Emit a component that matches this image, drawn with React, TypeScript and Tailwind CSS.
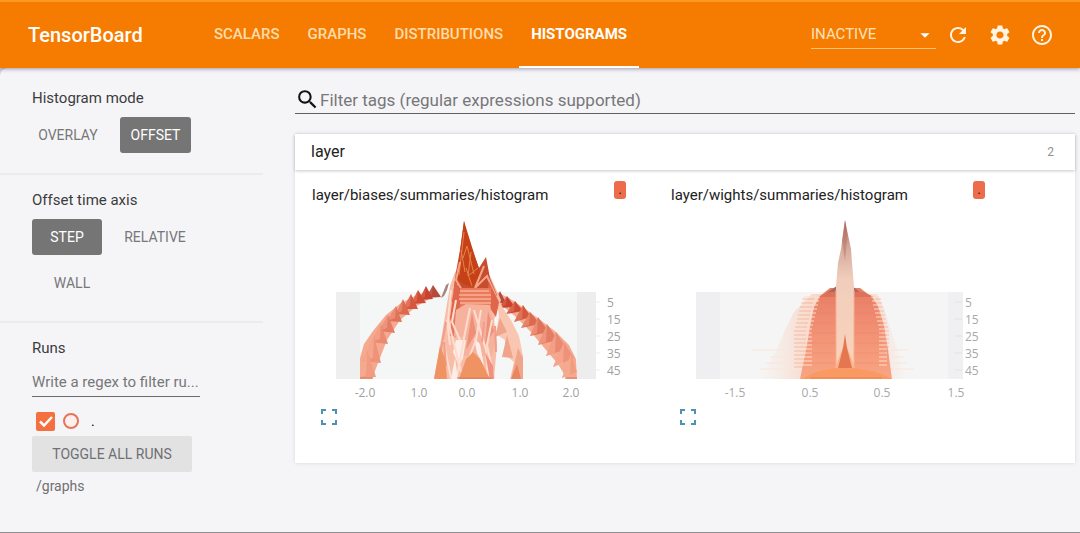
import { MdArrowDropDown, MdHelpOutline, MdRefresh, MdSearch, MdSettings } from 'react-icons/md';

type Tooth = [peakX: number, peakY: number, leftX: number, leftY: number, rightX: number, rightY: number];

const tabs = ['SCALARS', 'GRAPHS', 'DISTRIBUTIONS', 'HISTOGRAMS'];
const steps = ['5', '15', '25', '35', '45'];
const shades = ['#b54a3a', '#c9412f', '#cf4b34', '#d5573d', '#dc6a4e', '#e0745a', '#e47d64', '#ea8a70', '#ee937a', '#f09c80', '#f2a186'];

// Outer arcs, listed from the oldest step (back) to the newest (front)
const leftTeeth: Tooth[] = [
    [433, 285, 426, 298, 441, 297],
    [426, 286, 419, 300, 433, 299],
    [418, 290, 411, 304, 426, 303],
    [411, 294, 403, 309, 418, 309],
    [403, 299, 396, 314, 410, 315],
    [396, 306, 387, 321, 402, 322],
    [388, 315, 379, 331, 395, 333],
    [381, 324, 371, 342, 388, 344],
    [374, 336, 362, 361, 381, 363],
    [367, 350, 360, 378, 376, 377],
];
const rightTeeth: Tooth[] = [
    [500, 291, 494, 303, 506, 303],
    [507, 296, 499, 308, 515, 307],
    [515, 301, 506, 314, 523, 311],
    [523, 305, 514, 322, 531, 317],
    [530, 312, 521, 328, 540, 324],
    [538, 317, 530, 336, 549, 332],
    [547, 324, 538, 345, 558, 340],
    [556, 332, 546, 356, 567, 349],
    [564, 342, 553, 367, 574, 358],
    [571, 354, 562, 378, 577, 372],
];

const Teeth = ({ teeth }: { teeth: Tooth[] }) => (
    <>
        {teeth.map(([px, py, lx, ly, rx, ry], i) => (
            <g key={i}>
                <path d={`M${lx} ${ly}L${px} ${py}L${rx} ${ry}Z`} fill={shades[i]} />
                <path d={`M${lx} ${ly}L${px} ${py}L${px - 1} ${ly - 3}Z`} fill="#f9b49a" opacity={0.15 + i * 0.05} />
            </g>
        ))}
    </>
);

const StepLabels = ({ x }: { x: number }) => (
    <>
        {steps.map((s, i) => (
            <text key={s} x={x} y={307 + i * 17}>{s}</text>
        ))}
    </>
);

const BiasesChart = () => (
    <svg viewBox="312 213 340 190" className="block h-[190px] w-[340px] font-['Open_Sans',sans-serif] text-[12px]" role="img" aria-label="layer/biases histogram">
        <rect x="336" y="292" width="260" height="87" fill="#f5f6f6" />
        <rect x="336" y="292" width="24" height="87" fill="#efeff0" />
        <rect x="577" y="292" width="19" height="87" fill="#ededee" />

        {/* solid base of both arcs */}
        <path d="M433 290L417 295L401 303L386 315L373 331L364 344L360 358V379H372L378 363L387 340L400 320L417 306L433 297Z" fill="#f5aa90" />
        <path d="M497 292L509 298L524 308L539 319L556 332L569 345L576 359L577 379H567L558 364L546 350L531 332L516 317L500 304Z" fill="#f5aa90" />
        <Teeth teeth={leftTeeth} />
        <Teeth teeth={rightTeeth} />
        <path d="M441 298L446 285L449 283L447 290L444 296Z" fill="#a58580" />

        {/* inner right arc */}
        <path d="M496 294L503 308L511 320L519 336L523 356V379H510L514 362L505 355L505 340L496 334L499 316Z" fill="#f9c6b2" />
        <path d="M500 318L495 337L507 332ZM507 335L502 357L513 358ZM518 348L511 379H523V358Z" fill="#f0a48a" />
        <path d="M517 364L511 379H521Z" fill="#e8875f" />

        {/* centre block */}
        <path d="M455 272L450 286L446 310L441 340L434 379H494L497 345L494 320L501 300L490 276L480 270L466 262Z" fill="#f7bda6" />
        <path d="M464 221L467 236L479 268L486 257L490 278L497 295L492 302H452L456 272L460 250Z" fill="#c64d2e" />
        <path d="M464 221L460 252L457 278L463 284L473 287L481 275L472 247Z" fill="#c64216" />
        <path d="M464 232L459 275M463 258L467 246L474 274M471 252L468 276L478 268M466 268L472 286M461 250L465 272" fill="none" stroke="#e5834f" strokeWidth="1" />
        <path d="M460 262L456 280L465 295M484 266L475 288L487 276L496 296M457 284L450 303" fill="none" stroke="#f5a588" strokeWidth="2" />
        <path d="M455 281L450 318L455 338L466 300ZM489 282L486 302L496 317L499 302Z" fill="#df664a" />
        <rect x="460" y="288" width="31" height="22" fill="#e97a5b" />
        <path d="M460 291H489M459 295H491M459 299H491M460 303H491M462 307H488" stroke="#f9b096" strokeWidth="1.5" />
        <path d="M452 312L450 336H465L463 312Z" fill="#e57968" />
        <path d="M456 310L466 304L490 305L496 338L492 356H462L464 337L454 336Z" fill="#f5b39e" />
        <path d="M472 312L466 350L476 333ZM488 311L494 331L485 345Z" fill="#ee9078" />
        <path d="M456 340H466L463 358L459 366L453 352ZM474 338L480 344L484 366L477 353Z" fill="#fbeee8" />
        <path d="M451 290L448 320L456 352L461 372M470 308L464 338L457 376M474 310L486 350L488 376M481 310L476 340L468 360M443 340L451 378M447 320L450 345M492 320L487 345L494 378M456 300L452 322L460 340" fill="none" stroke="#ffdccd" strokeWidth="2" />
        <path d="M446 322L440 355M444 342L446 366M495 326L496 352M484 322L482 342" fill="none" stroke="#f29c8c" strokeWidth="2" />
        <path d="M434 379L440 346L445 358L447 379ZM459 379L466 359L473 352L480 359L490 379Z" fill="#f09362" />
        <path d="M451 379L455 358L458 379Z" fill="#faeee8" />
        <path d="M485 352L493 366L494 379H490Z" fill="#f1907e" />
        <path d="M360 378H373M565 378H577M457 378H491" stroke="#da7655" />

        <path d="M596 302H600M596 319H600M596 336H600M596 353H600M596 370H600" stroke="#ebebeb" />
        <g fill="#a0a0a0">
            <StepLabels x={607} />
            <g textAnchor="middle">
                <text x="365" y="397">-2.0</text>
                <text x="419" y="397">1.0</text>
                <text x="467" y="397">0.0</text>
                <text x="520" y="397">1.0</text>
                <text x="571" y="397">2.0</text>
            </g>
        </g>
    </svg>
);

const WeightsChart = () => (
    <svg viewBox="671 213 340 190" className="block h-[190px] w-[340px] font-['Open_Sans',sans-serif] text-[12px]" role="img" aria-label="layer/wights histogram">
        <defs>
            <linearGradient id="halo">
                <stop offset="0" stopColor="#f8d8c8" stopOpacity="0" />
                <stop offset="0.35" stopColor="#f8cdb9" stopOpacity="0.7" />
                <stop offset="0.7" stopColor="#f8c9b4" stopOpacity="0.8" />
                <stop offset="1" stopColor="#f8d8c8" stopOpacity="0" />
            </linearGradient>
            <linearGradient id="body" x1="0" y1="0" x2="0" y2="1">
                <stop offset="0" stopColor="#e67d65" />
                <stop offset="0.5" stopColor="#f29276" />
                <stop offset="1" stopColor="#f8a582" />
            </linearGradient>
            <linearGradient id="stem" x1="0" y1="0" x2="0" y2="1">
                <stop offset="0" stopColor="#a6584b" />
                <stop offset="0.18" stopColor="#d6a99a" />
                <stop offset="0.4" stopColor="#f0cdbc" />
                <stop offset="1" stopColor="#fbd3bb" />
            </linearGradient>
        </defs>
        <rect x="696" y="292" width="267" height="87" fill="#f5f5f5" />
        <rect x="696" y="292" width="24" height="87" fill="#efeff1" />
        <rect x="948" y="292" width="15" height="87" fill="#f0f0f2" />

        <path d="M812 294L794 312L784 332L776 351L760 379H906L898 350L890 328L884 308L877 294Z" fill="url(#halo)" />
        <path d="M752 350H908M770 357H904M765 363H907M760 369H914" stroke="#fae6da" strokeWidth="1" />
        <path d="M830 288L820 296L814 307L810 327L806 350L800 379H892L888 350L884 325L878 306L872 297L860 288Z" fill="url(#body)" />
        <path d="M838 285H851L862 294L868 297L822 296L831 290Z" fill="#a96a5e" />
        <path d="M830 292H863L874 297H818Z" fill="#dd725a" />

        {/* ridge ends, one thin line per step */}
        {Array.from({ length: 18 }, (_, i) => {
            const y = 297 + i * 4;
            const spread = Math.min(i, 8);
            return (
                <g key={i}>
                    <path d={`M${804 - spread} ${y}H${820 - spread}M${871 + spread} ${y}H${879 + spread}`} stroke="#ffdccb" />
                    <path d={`M${802 - spread} ${y + 2}H${814 - spread}M${875 + spread} ${y + 2}H${881 + spread}`} stroke="#f0a488" opacity="0.6" />
                </g>
            );
        })}
        <path d="M820 303H873M817 313H877M814 323H880M811 333H882M809 343H884M807 353H886M805 363H888" stroke="#e9795b" opacity="0.25" />

        <path d="M845 220L848 235L851 249L852 263L854 286V368H836V286L838 263L841 249L843 235Z" fill="url(#stem)" />
        <path d="M845 220L847 240L845 261L842 240Z" fill="#b5776a" opacity="0.55" />
        <path d="M836 290V368M854 290V368" stroke="#f8ae91" strokeWidth="1" />
        <path d="M845 342L855 368H835Z" fill="#fbb48a" />
        <path d="M845 334L847 348L852 368H838L843 348Z" fill="#e47750" />
        <path d="M802 379Q818 368 845 368Q873 368 892 379Z" fill="#fa9a63" />
        <path d="M810 378H882" stroke="#e78157" />

        <path d="M955 302H962M955 319H962M955 336H962M955 353H962M955 370H962" stroke="#e2e2e2" />
        <g fill="#a8a8a8">
            <StepLabels x={965} />
            <g textAnchor="middle">
                <text x="735" y="397">-1.5</text>
                <text x="810" y="397">0.5</text>
                <text x="882" y="397">0.5</text>
                <text x="956" y="397">1.5</text>
            </g>
        </g>
    </svg>
);

const cards = [
    { title: 'layer/biases/summaries/histogram', Chart: BiasesChart },
    { title: 'layer/wights/summaries/histogram', Chart: WeightsChart },
];

const Header = () => (
    <header className="relative z-10 flex h-[68px] items-center border-t-2 border-[#ff9820] bg-[#f57c00] pl-7 pr-[26px] text-white shadow-[0_1px_4px_rgba(60,40,90,0.45)]">
        <h1 className="w-[174px] shrink-0 text-[20px] font-medium">TensorBoard</h1>
        <nav className="flex h-full gap-1">
            {tabs.map((tab) => (
                <a
                    key={tab}
                    href="#"
                    className={
                        tab === 'HISTOGRAMS'
                            ? 'flex items-center border-b-2 border-white px-3 text-[15px] font-bold'
                            : 'flex items-center border-b-2 border-transparent px-3 text-[15px] font-medium text-[#ffdcae]'
                    }
                >
                    {tab}
                </a>
            ))}
        </nav>
        <div className="ml-auto flex items-center gap-[18px]">
            <div className="relative mr-[-8px] w-[125px] border-b border-[#ffc27c]">
                <select aria-label="Plugin" className="block h-[26px] w-full appearance-none bg-transparent text-[15px] text-[#ffe3bf] outline-none">
                    <option>INACTIVE</option>
                </select>
                <MdArrowDropDown size={22} className="pointer-events-none absolute right-0 top-[2px]" />
            </div>
            <button type="button" aria-label="Reload"><MdRefresh size={24} className="text-[#fff3e2]" /></button>
            <button type="button" aria-label="Settings"><MdSettings size={24} className="text-[#fff3e2]" /></button>
            <button type="button" aria-label="Help"><MdHelpOutline size={24} className="text-[#fff3e2]" /></button>
        </div>
    </header>
);

const Sidebar = () => (
    <aside className="w-[263px] shrink-0 text-[#3c3c3e]">
        <section className="border-b-2 border-[#ebebec] pb-5 pl-8 pt-5">
            <h2 className="text-[15px] leading-5">Histogram mode</h2>
            <div className="mt-[9px] flex gap-4 text-[14px]">
                <button type="button" className="h-9 w-[72px] rounded-[3px] text-[#77777a]">OVERLAY</button>
                <button type="button" className="h-9 w-[71px] rounded-[3px] bg-[#757575] text-white">OFFSET</button>
            </div>
        </section>
        <section className="border-b-2 border-[#ebebec] pb-5 pl-8 pt-[15px]">
            <h2 className="text-[15px] leading-5">Offset time axis</h2>
            <div className="mt-[9px] flex flex-wrap gap-x-[10px] gap-y-[10px] text-[14px]">
                <button type="button" className="h-9 w-[70px] rounded-[3px] bg-[#757575] text-white">STEP</button>
                <button type="button" className="h-9 w-[86px] rounded-[3px] text-[#77777a]">RELATIVE</button>
                <button type="button" className="h-9 w-20 rounded-[3px] text-[#77777a]">WALL</button>
            </div>
        </section>
        <section className="pl-8 pt-[15px]">
            <h2 className="text-[15px] leading-5">Runs</h2>
            <input
                type="text"
                aria-label="Filter runs"
                placeholder="Write a regex to filter ru..."
                className="mt-[9px] block h-[30px] w-[168px] border-b border-[#6c6c6e] bg-transparent text-[15px] outline-none placeholder:text-[#77777a]"
            />
            <div className="mb-[3px] mt-3 flex h-6 items-center gap-2 pl-1">
                <span className="relative flex">
                    <input id="run" type="checkbox" defaultChecked className="h-[19px] w-[19px] appearance-none rounded-[2px] bg-[#f4713f]" />
                    <svg width="19" height="19" viewBox="0 0 19 19" fill="none" stroke="#fff" strokeWidth="2.5" className="pointer-events-none absolute left-0 top-0">
                        <path d="M4 9.5L8 13.5L16 5" />
                    </svg>
                </span>
                <input type="radio" name="run" aria-label="Only this run" className="h-4 w-4 appearance-none rounded-full border-2 border-[#e5745b] bg-[#fdf0ec]" />
                <label htmlFor="run" className="pl-1 text-[14px] text-black">.</label>
            </div>
            <button type="button" className="h-9 w-40 rounded-[2px] bg-[#e2e2e3] text-[14px] text-[#707073]">TOGGLE ALL RUNS</button>
            <p className="pl-1 pt-1 text-[14px] leading-5 text-[#707073]">/graphs</p>
        </section>
    </aside>
);

const App = () => {
    return (
        <div className="flex min-h-screen flex-col border-b border-[#8f8f92] bg-[#d8cbdb] font-['Roboto',sans-serif]">
            <Header />
            <div className="flex grow rounded-tl-lg bg-[#f5f5f7]">
                <Sidebar />
                <main className="min-w-0 grow pb-4 pl-8 pr-[5px] pt-[18px]">
                    <label className="flex h-7 items-center border-b border-[#5f625f]">
                        <MdSearch size={25} className="shrink-0 text-[#111]" />
                        <input
                            type="text"
                            aria-label="Filter tags"
                            placeholder="Filter tags (regular expressions supported)"
                            className="h-full grow bg-transparent text-[17px] outline-none placeholder:text-[#77777a]"
                        />
                    </label>

                    <div className="mt-5 bg-white shadow-[0_0_4px_rgba(0,0,0,0.12)]">
                        <button type="button" className="flex h-9 w-full items-center justify-between pl-4 pr-[21px] shadow-[0_1px_3px_rgba(0,0,0,0.22)]">
                            <span className="text-[16px] text-[#222]">layer</span>
                            <span className="text-[12px] text-[#909093]">2</span>
                        </button>
                        <div className="flex pb-[38px] pl-[17px] pt-[9px]">
                            {cards.map(({ title, Chart }) => (
                                <article key={title} className="w-[359px] shrink-0">
                                    <div className="flex h-[34px] items-start">
                                        <h3 className="w-[302px] pt-[6px] text-[15px] leading-5 text-[#222]">{title}</h3>
                                        <span className="mt-[2px] h-[18px] w-3 rounded-[3px] bg-[#ed6c4c] text-center text-[12px] leading-[18px] text-black">.</span>
                                    </div>
                                    <Chart />
                                    <button type="button" aria-label="Toggle size" className="ml-[9px] mt-[6px] block">
                                        <svg width="16" height="16" viewBox="0 0 16 16" fill="none" stroke="#4f91b5" strokeWidth="2">
                                            <path d="M1 5V1H5M11 1H15V5M15 11V15H11M5 15H1V11" />
                                        </svg>
                                    </button>
                                </article>
                            ))}
                        </div>
                    </div>
                </main>
            </div>
        </div>
    );
};

export default App;
